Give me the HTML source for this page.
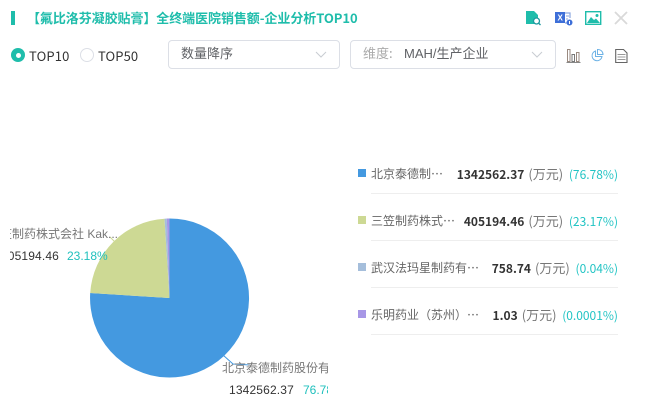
<!DOCTYPE html>
<html><head><meta charset="utf-8">
<style>
html,body{margin:0;padding:0;background:#fff}
body{width:645px;height:415px;overflow:hidden;position:relative;font-family:"Liberation Sans","Noto Sans CJK SC",sans-serif}
.a{position:absolute;white-space:nowrap;line-height:20px}
.n{font-family:"Noto Sans CJK SC",sans-serif}
.box{position:absolute;top:40px;height:27px;border:1px solid #dcdfe6;border-radius:4px;background:#fff;box-sizing:content-box}
.sq{position:absolute;left:358px;width:8px;height:8px}
.hr{position:absolute;left:371px;width:247px;height:1px;background:#eeeeee}
.lg{position:absolute;left:371px;width:247px;height:20px;line-height:20px;font-size:12px;font-family:"Noto Sans CJK SC",sans-serif;color:#666;white-space:nowrap}
.lg .r{position:absolute;right:0;top:0}
.lg b{color:#333;font-weight:700;margin-right:4px}
.lg u{text-decoration:none;font-size:13px;color:#777}
.lg i{font-style:normal;color:#21c4c4;margin-left:3px}
</style></head><body>
<div class="a" style="left:11px;top:11px;width:4px;height:14px;background:#1fbdab"></div>
<div class="a n" style="left:27px;top:8px;font-size:13px;font-weight:700;color:#1fbdab;letter-spacing:-.07px">【氟比洛芬凝胶贴膏】全终端医院销售额-企业分析TOP10</div>

<svg class="a" style="left:525px;top:9px" width="18" height="18" viewBox="0 0 18 18"><path d="M1 2H9L13 6V15H1Z" fill="#1fbdab"/><circle cx="11.5" cy="12" r="3" fill="#fff" stroke="#1f9aa0" stroke-width="1.3"/><path d="M13.5 14L15.5 16" stroke="#1f9aa0" stroke-width="1.3"/></svg>
<svg class="a" style="left:554px;top:9px" width="20" height="18" viewBox="0 0 20 18"><rect x="1" y="3" width="10" height="11" fill="#3e6fd8"/><path d="M11 4H16V9M11 14H13" stroke="#8aa6e0" stroke-width="1.2" fill="none"/><path d="M12 7H15M12 10H14" stroke="#8aa6e0"/><text x="3.5" y="11.5" font-size="8" font-weight="700" fill="#fff" font-family="Liberation Sans">X</text><circle cx="15.5" cy="13.5" r="3" fill="#3e6fd8"/><rect x="15" y="12" width="1" height="3" fill="#fff"/></svg>
<svg class="a" style="left:585px;top:11px" width="17" height="14" viewBox="0 0 17 14"><rect x="0.7" y="0.7" width="15" height="12.6" fill="#fff" stroke="#1fbdab" stroke-width="1.4"/><path d="M2 12L6 6L9 9L11 7.5L15 12Z" fill="#1fbdab"/><circle cx="12" cy="4.5" r="1.5" fill="#1fbdab"/></svg>
<svg class="a" style="left:614px;top:11px" width="14" height="14" viewBox="0 0 14 14"><path d="M1 1L13 13M13 1L1 13" stroke="#d9d9d9" stroke-width="1.8"/></svg>

<div class="a" style="left:11px;top:48px;width:14px;height:14px;border-radius:50%;background:#1fbdab"></div>
<div class="a" style="left:15.5px;top:52.5px;width:5px;height:5px;border-radius:50%;background:#fff"></div>
<div class="a n" style="left:29px;top:46px;font-size:13px;color:#333;letter-spacing:.15px">TOP10</div>
<div class="a" style="left:80px;top:48px;width:12px;height:12px;border-radius:50%;border:1px solid #dcdfe6"></div>
<div class="a n" style="left:98px;top:46px;font-size:13px;color:#333;letter-spacing:.1px">TOP50</div>

<div class="box" style="left:168px;width:170px"></div>
<div class="a n" style="left:181px;top:43px;font-size:13px;color:#606266">数量降序</div>
<svg class="a" style="left:315px;top:51px" width="12" height="8" viewBox="0 0 12 8"><path d="M1 1L6 6L11 1" fill="none" stroke="#c8ccd2"/></svg>

<div class="box" style="left:350px;width:204px"></div>
<div class="a n" style="left:363px;top:43px;font-size:13px;color:#aaa">维度:</div>
<div class="a" style="left:404px;top:44px;font-size:13px;color:#606266;font-family:'Liberation Sans','Noto Sans CJK SC',sans-serif">MAH/生产企业</div>
<svg class="a" style="left:531px;top:51px" width="12" height="8" viewBox="0 0 12 8"><path d="M1 1L6 6L11 1" fill="none" stroke="#c8ccd2"/></svg>

<svg class="a" style="left:566px;top:48px" width="15" height="15" viewBox="0 0 15 15"><path d="M0.5 14.5H14.5" fill="none" stroke="#888" stroke-width="1"/><rect x="1.5" y="1.5" width="2.5" height="12" fill="#fff" stroke="#9a8a80"/><rect x="6" y="6.5" width="2.5" height="7" fill="#fff" stroke="#777"/><rect x="10.5" y="4.5" width="2.5" height="9" fill="#fff" stroke="#9a8a80"/></svg>
<svg class="a" style="left:590px;top:48px" width="14" height="15" viewBox="0 0 14 15"><path d="M5.5 3A5 5 0 1 0 12 8.5H5.5Z" fill="none" stroke="#6eb3e6" stroke-width="1"/><path d="M7.5 1.5A5 5 0 0 1 13 6.5H7.5Z" fill="none" stroke="#6eb3e6" stroke-width="1"/></svg>
<svg class="a" style="left:615px;top:48px" width="13" height="16" viewBox="0 0 13 16"><path d="M0.7 1.5H8.5L12 5V14.5H0.7Z" fill="#fff" stroke="#666" stroke-width="1.1"/><path d="M2.5 6.5H10.5M2.5 9H10.5M2.5 11.5H10.5" stroke="#999"/></svg>

<svg class="a" style="left:0;top:200px" width="330" height="215" viewBox="0 200 330 215">
<path d="M169.5 298L169.5 218.5A79.5 79.5 0 1 1 90.2 293Z" fill="#4499e0"/>
<path d="M169.5 298L90.2 293A79.5 79.5 0 0 1 164.5 218.7Z" fill="#cdd994"/>
<path d="M169.5 298L164.5 218.7A79.5 79.5 0 0 1 166.8 218.5Z" fill="#a5bedb"/>
<path d="M169.5 298L166.8 218.5A79.5 79.5 0 0 1 169.5 218.5Z" fill="#a797e6"/>
<path d="M223 355L233 364L250 365" fill="none" stroke="#4499e0" stroke-width="1"/>
<path d="M110 237L115 242" fill="none" stroke="#cdd994" stroke-width="1"/>
</svg>

<div class="a" style="left:10px;top:224px;width:110px;height:20px;overflow:hidden;font-size:12px;color:#777;font-family:'Liberation Sans','Noto Sans CJK SC',sans-serif"><span style="position:absolute;right:2px">笠制药株式会社 Kak...</span></div>
<div class="a" style="left:10px;top:246px;width:49px;height:20px;overflow:hidden;font-size:12px;color:#333;letter-spacing:.15px"><span style="position:absolute;right:0">405194.46</span></div>
<div class="a" style="left:67px;top:246px;font-size:12px;color:#1fc0bd">23.18%</div>
<div class="a" style="left:222px;top:358px;width:106px;height:20px;overflow:hidden;font-size:12px;color:#777;font-family:'Liberation Sans','Noto Sans CJK SC',sans-serif">北京泰德制药股份有限公司</div>
<div class="a" style="left:229px;top:380px;font-size:12px;color:#333;letter-spacing:.15px">1342562.37</div>
<div class="a" style="left:303px;top:380px;width:25px;height:20px;overflow:hidden;font-size:12px;color:#1fc0bd">76.78%</div>

<div class="sq" style="top:169px;background:#4499e0"></div>
<div class="lg" style="top:164px">北京泰德制…<span class="r"><b>1342562.37</b><u>(万元)</u> <i>(76.78%)</i></span></div>
<div class="hr" style="top:193px"></div>
<div class="sq" style="top:216px;background:#cdd994"></div>
<div class="lg" style="top:211px">三笠制药株式…<span class="r"><b>405194.46</b><u>(万元)</u> <i>(23.17%)</i></span></div>
<div class="hr" style="top:240px"></div>
<div class="sq" style="top:263px;background:#a5bedb"></div>
<div class="lg" style="top:258px">武汉法玛星制药有…<span class="r"><b>758.74</b><u>(万元)</u> <i>(0.04%)</i></span></div>
<div class="hr" style="top:287px"></div>
<div class="sq" style="top:310px;background:#a797e6"></div>
<div class="lg" style="top:305px">乐明药业（苏州）…<span class="r"><b>1.03</b><u>(万元)</u> <i>(0.0001%)</i></span></div>
<div class="hr" style="top:334px"></div>
</body></html>
